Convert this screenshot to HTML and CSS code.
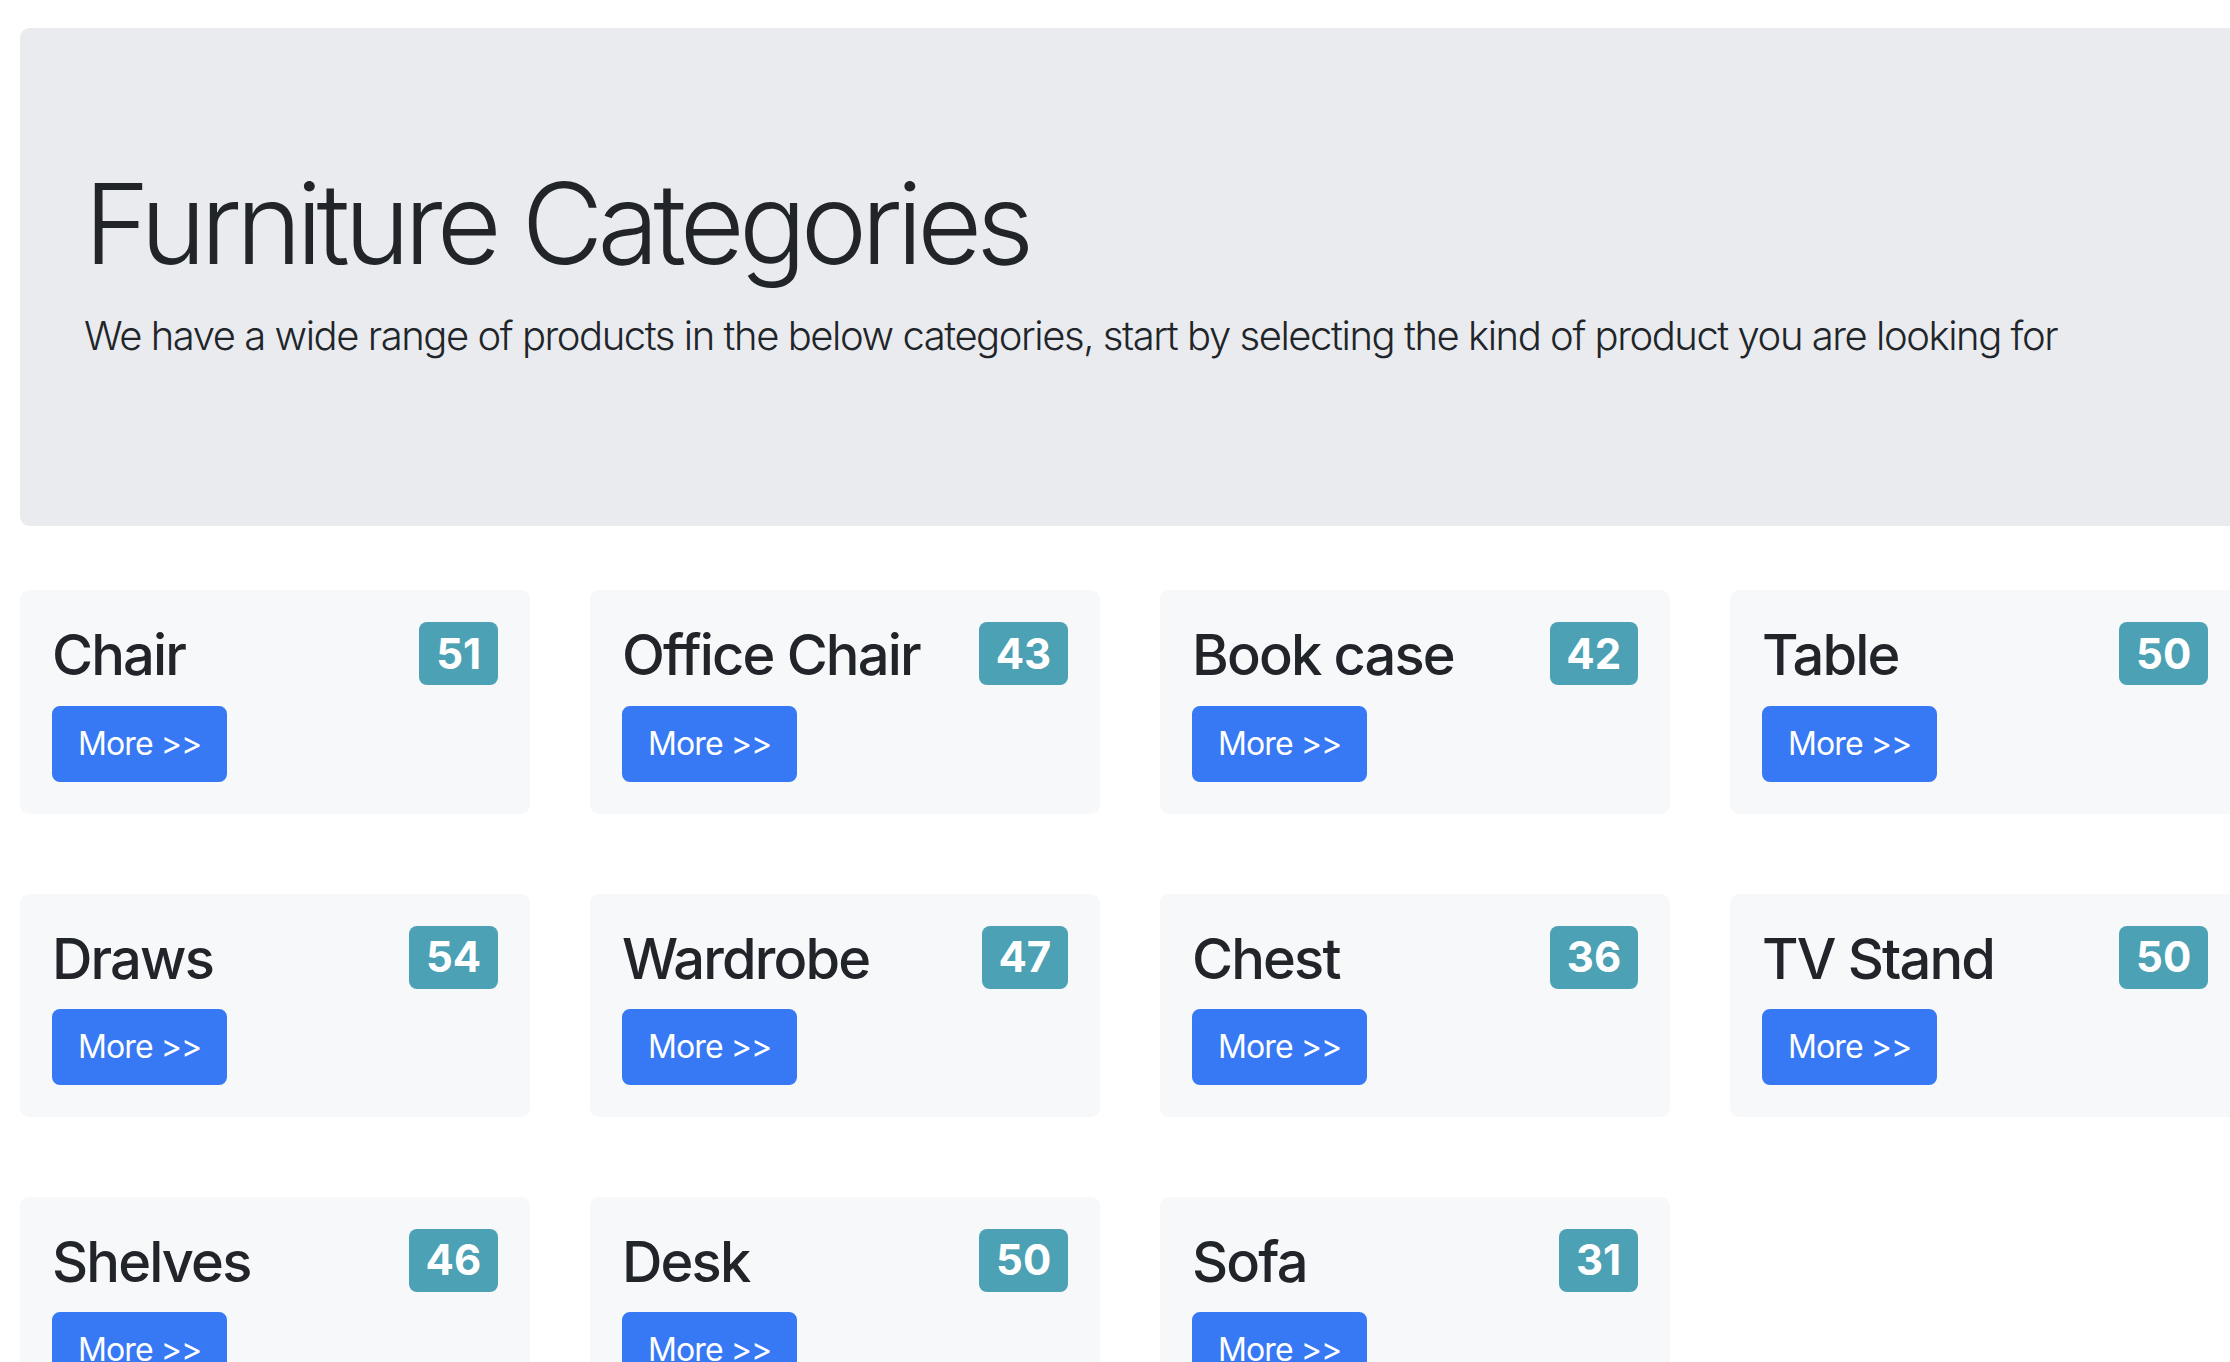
FILE: index.html
```html
<!DOCTYPE html>
<html lang="en">
<head>
<meta charset="utf-8">
<title>Furniture Categories</title>
<link rel="stylesheet" href="styles.css">
</head>
<body>
<div class="page">
  <header class="jumbotron">
    <h1 class="display">Furniture Categories</h1>
    <p class="lead">We have a wide range of products in the below categories, start by selecting the kind of product you are looking for</p>
  </header>
  <main class="grid">
    <div class="card"><div class="card-head"><h3 class="card-title">Chair</h3><span class="badge">51</span></div><a class="btn" href="#">More &gt;&gt;</a></div>
    <div class="card"><div class="card-head"><h3 class="card-title">Office Chair</h3><span class="badge">43</span></div><a class="btn" href="#">More &gt;&gt;</a></div>
    <div class="card"><div class="card-head"><h3 class="card-title">Book case</h3><span class="badge">42</span></div><a class="btn" href="#">More &gt;&gt;</a></div>
    <div class="card"><div class="card-head"><h3 class="card-title">Table</h3><span class="badge">50</span></div><a class="btn" href="#">More &gt;&gt;</a></div>
    <div class="card"><div class="card-head"><h3 class="card-title">Draws</h3><span class="badge">54</span></div><a class="btn" href="#">More &gt;&gt;</a></div>
    <div class="card"><div class="card-head"><h3 class="card-title">Wardrobe</h3><span class="badge">47</span></div><a class="btn" href="#">More &gt;&gt;</a></div>
    <div class="card"><div class="card-head"><h3 class="card-title">Chest</h3><span class="badge">36</span></div><a class="btn" href="#">More &gt;&gt;</a></div>
    <div class="card"><div class="card-head"><h3 class="card-title">TV Stand</h3><span class="badge">50</span></div><a class="btn" href="#">More &gt;&gt;</a></div>
    <div class="card"><div class="card-head"><h3 class="card-title">Shelves</h3><span class="badge">46</span></div><a class="btn" href="#">More &gt;&gt;</a></div>
    <div class="card"><div class="card-head"><h3 class="card-title">Desk</h3><span class="badge">50</span></div><a class="btn" href="#">More &gt;&gt;</a></div>
    <div class="card"><div class="card-head"><h3 class="card-title">Sofa</h3><span class="badge">31</span></div><a class="btn" href="#">More &gt;&gt;</a></div>
  </main>
</div>
</body>
</html>
```
FILE: styles.css
```css
html, body {
  margin: 0;
  padding: 0;
  overflow: hidden;
  background: #ffffff;
}
body {
  font-family: Inter, "Noto Sans", "Liberation Sans", sans-serif;
  color: #212529;
}
.page {
  width: 2220px;
  padding: 28px 0 0 20px;
}
.jumbotron {
  background: #e9ebef;
  padding: 128px 64px;
  border-radius: 9.6px;
  margin-bottom: 64px;
}
.display {
  font-size: 112px;
  font-weight: 300;
  line-height: 1.2;
  letter-spacing: -5.8px;
  margin: 0 0 16px;
}
.lead {
  font-size: 40px;
  font-weight: 300;
  line-height: 1.5;
  letter-spacing: -1.45px;
  white-space: nowrap;
  margin: 0 0 32px;
}
.grid {
  display: grid;
  grid-template-columns: repeat(4, 510px);
  column-gap: 60px;
  row-gap: 80px;
}
.card {
  background: #f7f8fa;
  border-radius: 9px;
  padding: 32px;
}
.card-head {
  display: flex;
  justify-content: space-between;
  align-items: flex-start;
}
.card-title {
  font-size: 56px;
  font-weight: 500;
  line-height: 1.2;
  letter-spacing: -1.85px;
  margin: 0 0 16px;
}
.badge {
  font-size: 42px;
  font-weight: 700;
  line-height: 1;
  padding: 10.5px 16.8px;
  border-radius: 8px;
  background: #4ca1b5;
  color: #ffffff;
}
.btn {
  display: inline-block;
  font-size: 32px;
  line-height: 1.5;
  letter-spacing: -0.9px;
  padding: 12px 24px;
  border: 2px solid #3779f5;
  border-radius: 8px;
  background: #3779f5;
  color: #ffffff;
  text-decoration: none;
}
```
